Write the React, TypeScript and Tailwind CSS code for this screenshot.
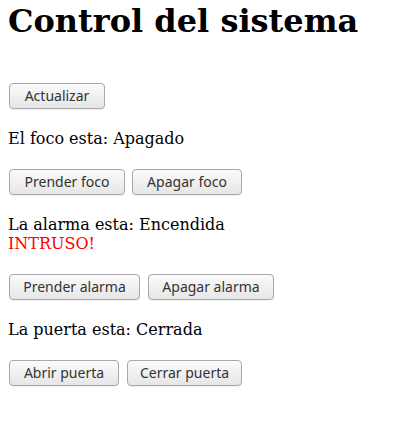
import React from "react";

const serif = "font-['DejaVu_Serif',serif]";

function Btn({ label, w }: { label: string; w: string }) {
  return (
    <button
      className={`${w} h-[26px] rounded-[4px] border border-[#a8a8a8] bg-gradient-to-b from-[#fbfbfb] to-[#e6e6e6] text-[14px] leading-none text-[#333333] font-['Noto_Sans',sans-serif] shadow-[0_1px_0_rgba(0,0,0,0.06)]`}
    >
      {label}
    </button>
  );
}

export default function App() {
  return (
    <main className={`min-h-screen bg-white px-2 text-black ${serif}`}>
      <h1 className="mt-[3px] text-[32px] font-bold leading-[37px]">
        Control del sistema
      </h1>

      <div className="mt-[43px] ml-px flex gap-2">
        <Btn label="Actualizar" w="w-[96px]" />
      </div>

      <p className="mt-5 text-[16px] leading-[19px]">El foco esta: Apagado</p>

      <div className="mt-[21px] ml-px flex gap-[7px]">
        <Btn label="Prender foco" w="w-[116px]" />
        <Btn label="Apagar foco" w="w-[110px]" />
      </div>

      <div className="mt-5 text-[16px] leading-[19px]">
        <p>La alarma esta: Encendida</p>
        <p className="text-[#ff0000]">INTRUSO!</p>
      </div>

      <div className="mt-[21px] ml-px flex gap-[8px]">
        <Btn label="Prender alarma" w="w-[131px]" />
        <Btn label="Apagar alarma" w="w-[126px]" />
      </div>

      <p className="mt-5 text-[16px] leading-[19px]">La puerta esta: Cerrada</p>

      <div className="mt-[21px] ml-px flex gap-[8px]">
        <Btn label="Abrir puerta" w="w-[110px]" />
        <Btn label="Cerrar puerta" w="w-[115px]" />
      </div>
    </main>
  );
}
